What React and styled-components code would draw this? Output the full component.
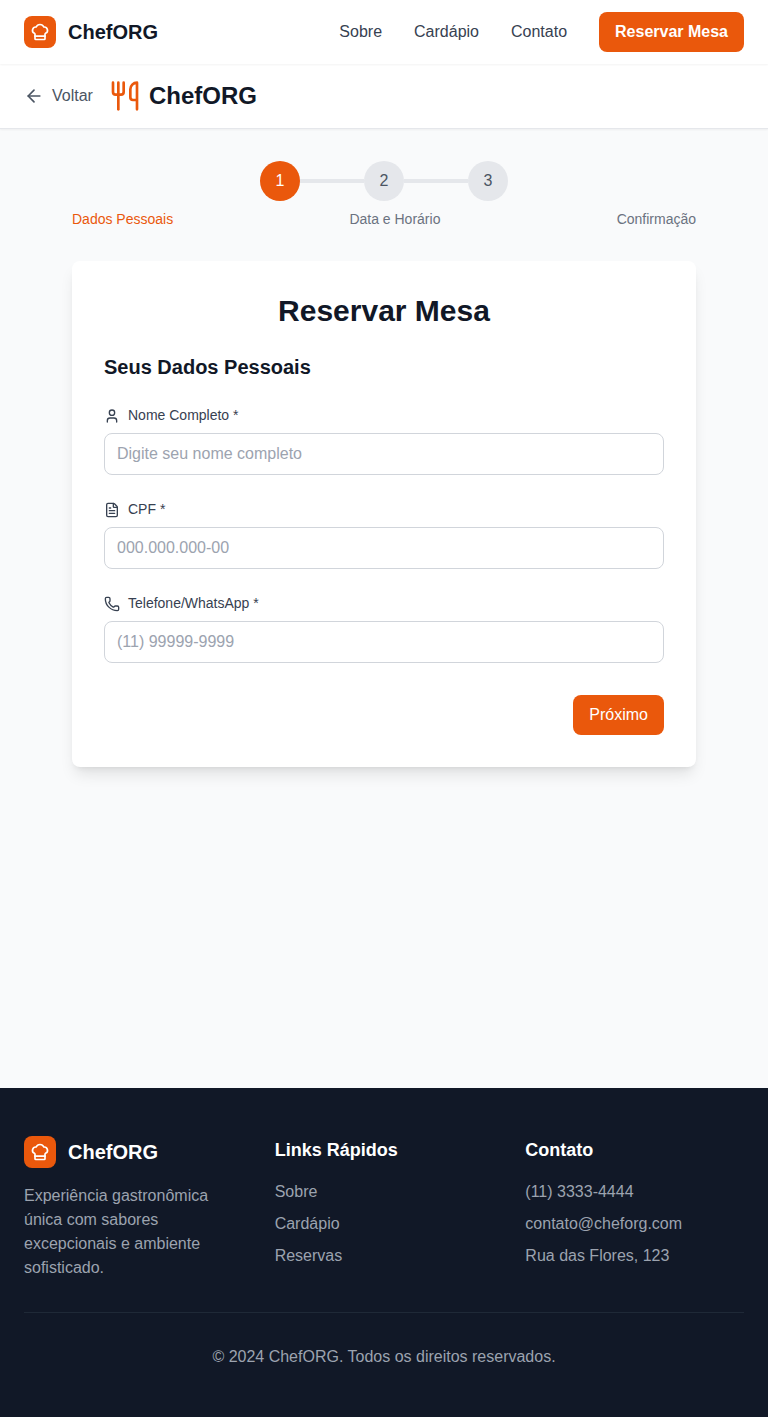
import React from "react";
import styled, { createGlobalStyle } from "styled-components";
import { ChefHat, ArrowLeft, Utensils, User, FileText, Phone } from "lucide-react";

const GlobalStyle = createGlobalStyle`
  *, *::before, *::after { box-sizing: border-box; }
  body {
    margin: 0;
    background: #f9fafb;
    color: #111827;
    font-family: "Liberation Sans", Arial, sans-serif;
    font-size: 16px;
    line-height: 24px;
  }
  h1, h2, h3, p, ul { margin: 0; padding: 0; }
  a { color: inherit; text-decoration: none; }
  button, input { font: inherit; }
  svg { display: block; flex-shrink: 0; }
`;

const Page = styled.div`
  display: flex;
  flex-direction: column;
  min-height: 1417px;
`;

const TopBar = styled.header`
  position: sticky;
  top: 0;
  z-index: 10;
  display: flex;
  align-items: center;
  justify-content: space-between;
  height: 64px;
  padding: 0 24px;
  background: rgba(255, 255, 255, 0.95);
  backdrop-filter: blur(4px);
  box-shadow: 0 1px 2px rgba(0, 0, 0, 0.05);

  &::before {
    content: "";
    position: absolute;
    inset: 0;
    z-index: -1;
    background: #fff;
  }
`;

const Brand = styled.div`
  display: flex;
  align-items: center;
  gap: 12px;
  font-size: 20px;
  line-height: 28px;
  font-weight: 700;
`;

const BrandMark = styled.span`
  display: flex;
  align-items: center;
  justify-content: center;
  width: 32px;
  height: 32px;
  border-radius: 8px;
  background: #ea580c;
  color: #fff;
`;

const Nav = styled.nav`
  display: flex;
  align-items: center;
  gap: 32px;
  color: #374151;
`;

const Button = styled.button`
  height: 40px;
  padding: 8px 16px;
  border: 0;
  border-radius: 8px;
  background: #ea580c;
  color: #fff;
  font-weight: ${({ $bold }) => ($bold ? 700 : 400)};
  line-height: 24px;
  cursor: pointer;
`;

const SubBar = styled.div`
  display: flex;
  align-items: center;
  gap: 16px;
  height: 65px;
  padding: 0 24px;
  background: #fff;
  border-bottom: 1px solid #e5e7eb;
  box-shadow: 0 1px 2px rgba(0, 0, 0, 0.05);
`;

const BackLink = styled.a`
  display: flex;
  align-items: center;
  gap: 8px;
  color: #4b5563;
`;

const SubTitle = styled.div`
  display: flex;
  align-items: center;
  gap: 8px;
  font-size: 24px;
  line-height: 32px;
  font-weight: 700;

  svg { color: #ea580c; }
`;

const Main = styled.main`
  flex: 1;
  width: 624px;
  margin: 0 auto;
  padding-top: 32px;
`;

const Steps = styled.div`
  display: flex;
  align-items: center;
  justify-content: center;
`;

const Step = styled.span`
  display: flex;
  align-items: center;
  justify-content: center;
  width: 40px;
  height: 40px;
  border-radius: 50%;
  background: ${({ $active }) => ($active ? "#ea580c" : "#e5e7eb")};
  color: ${({ $active }) => ($active ? "#fff" : "#4b5563")};
`;

const StepLine = styled.span`
  width: 64px;
  height: 4px;
  background: #e5e7eb;
`;

const StepLabels = styled.div`
  display: flex;
  justify-content: space-between;
  margin: 8px 0 32px;
  font-size: 14px;
  line-height: 20px;
`;

const StepLabel = styled.span`
  color: ${({ $active }) => ($active ? "#ea580c" : "#6b7280")};
`;

const Card = styled.section`
  padding: 32px;
  border-radius: 8px;
  background: #fff;
  box-shadow: 0 10px 15px -3px rgba(0, 0, 0, 0.1), 0 4px 6px -4px rgba(0, 0, 0, 0.1);
`;

const CardTitle = styled.h1`
  margin-bottom: 24px;
  font-size: 30px;
  line-height: 36px;
  text-align: center;
`;

const SectionTitle = styled.h2`
  margin-bottom: 24px;
  font-size: 20px;
  line-height: 28px;
`;

const Fields = styled.div`
  display: flex;
  flex-direction: column;
  gap: 24px;
`;

const Label = styled.label`
  display: block;
  height: 20px;
  margin-bottom: 8px;
  color: #374151;
  font-size: 14px;
  line-height: 20px;

  svg {
    display: inline;
    margin-right: 8px;
    vertical-align: middle;
  }
`;

const Input = styled.input`
  display: block;
  width: 100%;
  height: 42px;
  padding: 8px 12px;
  border: 1px solid #d1d5db;
  border-radius: 8px;
  background: #fff;

  &::placeholder { color: #9ca3af; opacity: 1; }
`;

const Actions = styled.div`
  display: flex;
  justify-content: flex-end;
  margin-top: 32px;
`;

const Footer = styled.footer`
  height: 329px;
  padding: 48px 24px;
  background: #111827;
  color: #9ca3af;
`;

const FooterGrid = styled.div`
  display: grid;
  grid-template-columns: repeat(3, 1fr);
  gap: 32px;

  ${Brand} { color: #fff; margin-bottom: 16px; }
`;

const FooterTitle = styled.h3`
  margin-bottom: 16px;
  color: #fff;
  font-size: 18px;
  line-height: 28px;
`;

const FooterList = styled.ul`
  display: flex;
  flex-direction: column;
  gap: 8px;
  list-style: none;
`;

const Copyright = styled.p`
  margin-top: 32px;
  padding-top: 32px;
  border-top: 1px solid #1f2937;
  text-align: center;
`;

const steps = ["Dados Pessoais", "Data e Horário", "Confirmação"];

const fields = [
  { id: "nome", icon: User, label: "Nome Completo *", placeholder: "Digite seu nome completo" },
  { id: "cpf", icon: FileText, label: "CPF *", placeholder: "000.000.000-00" },
  { id: "telefone", icon: Phone, label: "Telefone/WhatsApp *", placeholder: "(11) 99999-9999" },
];

const footerColumns = [
  { title: "Links Rápidos", items: ["Sobre", "Cardápio", "Reservas"] },
  { title: "Contato", items: ["(11) 3333-4444", "contato@cheforg.com", "Rua das Flores, 123"] },
];

function Logo() {
  return (
    <Brand>
      <BrandMark><ChefHat size={20} /></BrandMark>
      ChefORG
    </Brand>
  );
}

export default function App() {
  return (
    <Page>
      <GlobalStyle />
      <TopBar>
        <Logo />
        <Nav>
          <a href="#sobre">Sobre</a>
          <a href="#cardapio">Cardápio</a>
          <a href="#contato">Contato</a>
          <Button $bold>Reservar Mesa</Button>
        </Nav>
      </TopBar>
      <SubBar>
        <BackLink href="#voltar"><ArrowLeft size={20} />Voltar</BackLink>
        <SubTitle><Utensils size={32} />ChefORG</SubTitle>
      </SubBar>
      <Main>
        <Steps>
          {steps.map((name, i) => (
            <React.Fragment key={name}>
              {i > 0 && <StepLine />}
              <Step $active={i === 0}>{i + 1}</Step>
            </React.Fragment>
          ))}
        </Steps>
        <StepLabels>
          {steps.map((name, i) => (
            <StepLabel key={name} $active={i === 0}>{name}</StepLabel>
          ))}
        </StepLabels>
        <Card>
          <CardTitle>Reservar Mesa</CardTitle>
          <SectionTitle>Seus Dados Pessoais</SectionTitle>
          <Fields>
            {fields.map(({ id, icon: Icon, label, placeholder }) => (
              <div key={id}>
                <Label htmlFor={id}><Icon size={16} />{label}</Label>
                <Input id={id} placeholder={placeholder} />
              </div>
            ))}
          </Fields>
          <Actions><Button>Próximo</Button></Actions>
        </Card>
      </Main>
      <Footer>
        <FooterGrid>
          <div>
            <Logo />
            <p>Experiência gastronômica única com sabores excepcionais e ambiente sofisticado.</p>
          </div>
          {footerColumns.map(({ title, items }) => (
            <div key={title}>
              <FooterTitle>{title}</FooterTitle>
              <FooterList>
                {items.map((item) => <li key={item}>{item}</li>)}
              </FooterList>
            </div>
          ))}
        </FooterGrid>
        <Copyright>© 2024 ChefORG. Todos os direitos reservados.</Copyright>
      </Footer>
    </Page>
  );
}
